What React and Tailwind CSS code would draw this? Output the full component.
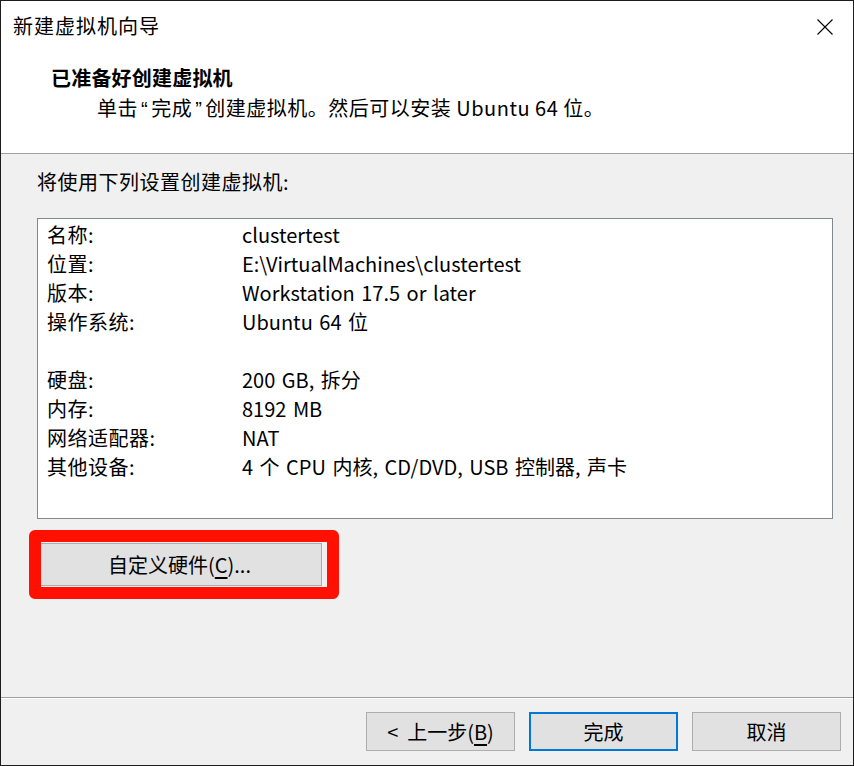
const ROWS = [
  ["名称:", "clustertest"],
  ["位置:", "E:\\VirtualMachines\\clustertest"],
  ["版本:", "Workstation 17.5 or later"],
  ["操作系统:", "Ubuntu 64 位"],
  null,
  ["硬盘:", "200 GB, 拆分"],
  ["内存:", "8192 MB"],
  ["网络适配器:", "NAT"],
  ["其他设备:", "4 个 CPU 内核, CD/DVD, USB 控制器, 声卡"],
];

function WizButton({ children, primary }) {
  return (
    <button
      className={`w-[149px] h-[39px] bg-[#e1e1e1] text-[20px] text-black flex items-center justify-center ${
        primary ? "border-2 border-[#0078d7]" : "border border-[#adadad]"
      }`}
    >
      {children}
    </button>
  );
}

export default function App() {
  return (
    <div
      className="w-[854px] h-[766px] flex flex-col border border-[#1c1c1c] bg-[#f0f0f0] text-black overflow-hidden"
      style={{ fontFamily: '"Noto Sans CJK SC", "Noto Sans", sans-serif' }}
    >
      {/* Header */}
      <div className="h-[153px] shrink-0 bg-white border-b border-[#a0a0a0]">
        <div className="h-[50px] flex items-center justify-between pl-[12px] pr-[20px]">
          <span className="text-[20px] leading-[28px] tracking-[1px]">新建虚拟机向导</span>
          <svg width="16" height="16" viewBox="0 0 16 16" className="mt-[1px]">
            <path d="M0.5 0.5 L15.5 15.5 M15.5 0.5 L0.5 15.5" stroke="#000" strokeWidth="1.1" fill="none" />
          </svg>
        </div>
        <div className="mt-[13px] pl-[50px] text-[20px] leading-[28px] font-bold tracking-[0.2px]">已准备好创建虚拟机</div>
        <div className="mt-[2px] pl-[96px] text-[20px] leading-[28px] tracking-[0.5px]">
          单击<span className="font-['Liberation_Sans'] px-[3px]">“</span>完成
          <span className="font-['Liberation_Sans'] px-[3px]">”</span>创建虚拟机。然后可以安装 Ubuntu 64 位。
        </div>
      </div>

      {/* Body */}
      <div className="flex-1 px-[36px] pt-[14px]">
        <div className="text-[20px] leading-[28px] tracking-[0.5px]">将使用下列设置创建虚拟机:</div>
        <div className="mt-[22px] w-[796px] h-[301px] bg-white border border-[#828790] pt-[1px] pl-[9px]">
          {ROWS.map((r, i) =>
            r ? (
              <div key={i} className="flex h-[29px] items-center text-[20px]">
                <span className="w-[195px] shrink-0 tracking-[0.5px]">{r[0]}</span>
                <span className="[word-spacing:2px]">{r[1]}</span>
              </div>
            ) : (
              <div key={i} className="h-[29px]" />
            )
          )}
        </div>
        <div className="relative mt-[24px] w-[285px] h-[43px]">
          <button className="w-full h-full bg-[#e1e1e1] border border-[#adadad] text-[20px] flex items-center justify-center">
            自定义硬件(<span className="underline underline-offset-[4px]">C</span>)...
          </button>
          <div className="absolute left-[-8px] top-[-13px] w-[310px] h-[69px] border-[12px] border-[#ff1000] rounded-[6px] pointer-events-none" />
        </div>
      </div>

      {/* Footer */}
      <div className="h-[68px] shrink-0 border-t border-[#a0a0a0]">
        <div className="h-full border-t border-white flex justify-end items-start pt-[13px] pr-[12px] gap-[14px]">
          <WizButton>
            &lt;&nbsp; 上一步(<span className="underline underline-offset-[4px]">B</span>)
          </WizButton>
          <WizButton primary>完成</WizButton>
          <WizButton>取消</WizButton>
        </div>
      </div>
    </div>
  );
}
